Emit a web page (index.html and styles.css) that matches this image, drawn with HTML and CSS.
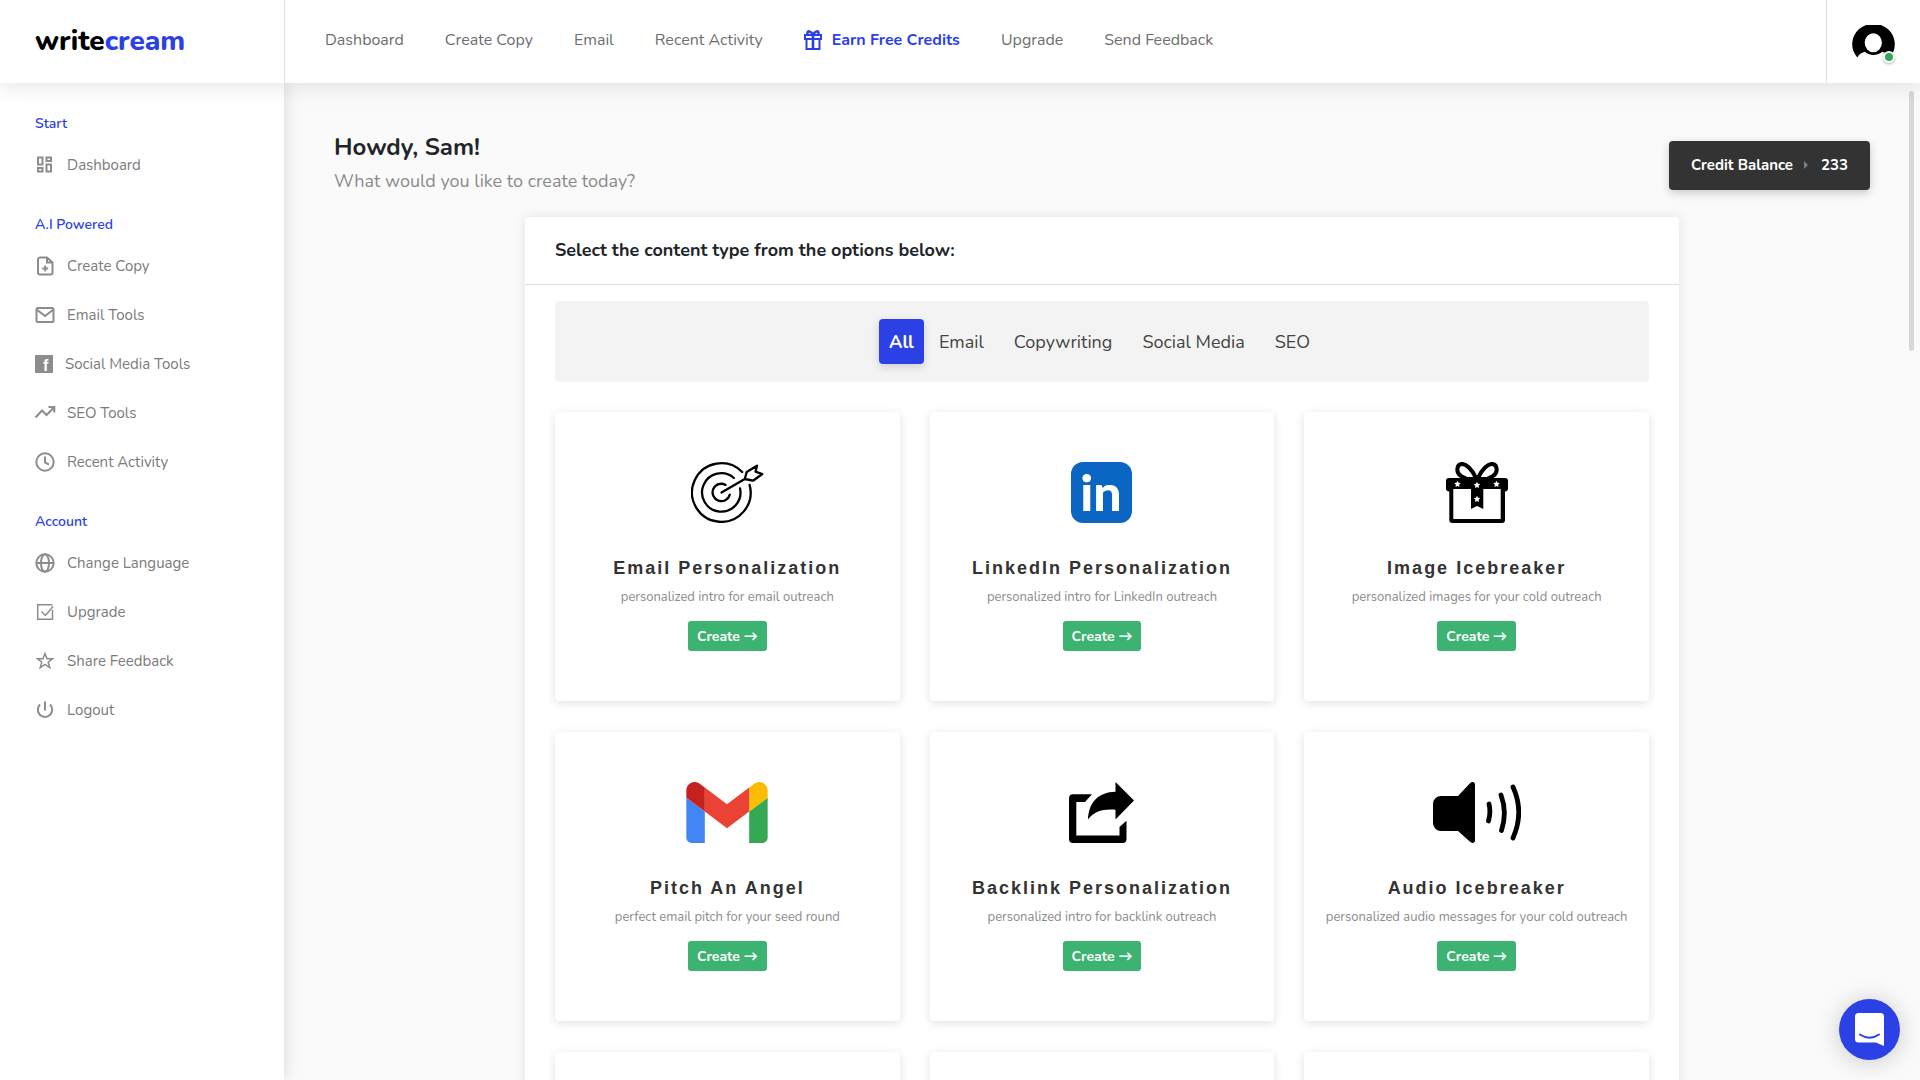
FILE: index.html
```html
<!DOCTYPE html>
<html lang="en">
<head>
    <meta charset="UTF-8">
    <meta name="viewport" content="width=device-width, initial-scale=1.0">
    <title>Writecream</title>
    <link rel="stylesheet" href="styles.css">
</head>
<body>
    <header class="topbar">
        <a class="logo" href="#">write<span>cream</span></a>
        <nav class="topnav">
            <a href="#">Dashboard</a>
            <a href="#">Create Copy</a>
            <a href="#">Email</a>
            <a href="#">Recent Activity</a>
            <a class="earn" href="#">
                <svg width="18" height="20" viewBox="0 0 18 20" fill="none" stroke="currentColor" stroke-width="2"><path d="M1 5h16v4H1zM2.500 9v10h13V9"/><path d="M9 5v14M9 4.500C7 1 3 0 3.500 4M9 4.500c2-3.500 6-4.500 5.500-.500" stroke-width="2.600"/></svg>
                Earn Free Credits
            </a>
            <a href="#">Upgrade</a>
            <a href="#">Send Feedback</a>
        </nav>
        <button class="profile" aria-label="Profile">
            <span class="avatar">
                <svg width="43" height="43" viewBox="0 0 43 43"><path d="M5.300 32.500A21.300 20.500 0 1 1 37.700 32.500C36 29.500 33 27.500 30 26.800C26 31 17 31 13 26.800C10 27.500 7 29 5.300 32.500z"/><ellipse cx="21.300" cy="17.700" rx="8.600" ry="9.500" fill="#fff"/></svg>
                <span class="status"></span>
            </span>
        </button>
    </header>

    <div class="layout">
        <aside class="sidebar">
            <h2>Start</h2>
            <ul>
                <li><a href="#"><svg viewBox="0 0 20 20"><path d="M3 2.500h4.500v7H3zM11.500 2.500H16v3.500h-4.500zM11.500 9.500H16v7h-4.500zM3 13h4.500v3.500H3z"/></svg>Dashboard</a></li>
            </ul>
            <h2>A.I Powered</h2>
            <ul>
                <li><a href="#"><svg viewBox="0 0 20 20"><path d="M12 1.500H5A2 2 0 0 0 3 3.500v13a2 2 0 0 0 2 2h10.500a2 2 0 0 0 2-2V6.500zM12 1.500v5h5.500M10.200 9.500v6M7.200 12.500h6"/></svg>Create Copy</a></li>
                <li><a href="#"><svg viewBox="0 0 20 20"><rect x="1.500" y="3" width="17" height="14" rx="1.500"/><path d="M1.500 4.500L10 11l8.500-6.500"/></svg>Email Tools</a></li>
                <li><a class="facebook" href="#"><svg viewBox="0 0 18 20"><path class="solid" d="M0 1h18v18H0z"/><text x="8" y="17">f</text></svg>Social Media Tools</a></li>
                <li><a href="#"><svg viewBox="0 0 20 20"><path d="M.500 14.500l6.500-7 4.500 4.500L19 4.500M13.500 4H19.300v5.500"/></svg>SEO Tools</a></li>
                <li><a href="#"><svg viewBox="0 0 20 20"><circle cx="10" cy="10" r="8.700"/><path d="M10 4.500v6l4 2.200"/></svg>Recent Activity</a></li>
            </ul>
            <h2>Account</h2>
            <ul>
                <li><a href="#"><svg viewBox="0 0 20 20"><circle cx="10" cy="10" r="8.700"/><ellipse cx="10" cy="10" rx="4" ry="8.700"/><path d="M1.500 10h17"/></svg>Change Language</a></li>
                <li><a class="thin" href="#"><svg viewBox="0 0 20 20"><path d="M17.500 2.700H2.700v14.600h14.800V8M6.500 9.500l4 4L18 4.500"/></svg>Upgrade</a></li>
                <li><a class="thin" href="#"><svg viewBox="0 0 20 20"><path d="M10 2.500l2 5.200h5.500l-4.300 3.500 1.600 5.600L10 13.500l-4.800 3.300 1.600-5.600L2.500 7.700H8z"/></svg>Share Feedback</a></li>
                <li><a href="#"><svg viewBox="0 0 20 20"><path d="M10 1.500v9M5 4.500a7.200 7.200 0 1 0 10 0"/></svg>Logout</a></li>
            </ul>
        </aside>

        <main class="content">
            <div class="welcome">
                <div>
                    <h1>Howdy, Sam!</h1>
                    <p>What would you like to create today?</p>
                </div>
                <button class="credit">Credit Balance <i></i> 233</button>
            </div>

            <section class="panel">
                <h2 class="panel-title">Select the content type from the options below:</h2>
                <div class="panel-body">
                    <div class="tabs">
                        <button class="tab active">All</button>
                        <button class="tab">Email</button>
                        <button class="tab">Copywriting</button>
                        <button class="tab">Social Media</button>
                        <button class="tab">SEO</button>
                    </div>

                    <div class="cards">
                        <article class="card">
                            <svg width="73" height="61" viewBox="0 0 73 61" fill="none" stroke="#000" stroke-width="2.300" stroke-linecap="round" stroke-linejoin="round"><path d="M51.200 10A29.300 29.300 0 1 0 58.600 22.900M42.900 16A19.200 19.200 0 1 0 49 26.300M34.600 22.900A8.700 8.700 0 1 0 38.700 32.700M30.500 30.500L53.800 17M53.800 17l1.900-7L66 3.700l-1.500 6 6.800 2.300L62 18.700z"/></svg>
                            <h3>Email Personalization</h3>
                            <p>personalized intro for email outreach</p>
                            <button class="create">Create →</button>
                        </article>
                        <article class="card">
                            <svg class="linkedin" width="61" height="61" viewBox="0 0 61 61"><rect width="61" height="61" rx="12" fill="#0a66c2"/><text x="30" y="49" text-anchor="middle">in</text></svg>
                            <h3>LinkedIn Personalization</h3>
                            <p>personalized intro for LinkedIn outreach</p>
                            <button class="create">Create →</button>
                        </article>
                        <article class="card">
                            <svg width="62" height="61" viewBox="0 0 62 61">
                                <defs><path id="star" d="M0-3.300l1 2.100 2.300.300-1.700 1.600.400 2.300L0 1.900-2 3l.400-2.300L-3.300-.900-1-1.200z" fill="#fff"/></defs>
                                <path d="M30 16C26 7 20 1.500 15.500 2 10 3 10 11 15 14l5 2.500M32 16C36 7 42 1.500 46.500 2 52 3 52 11 47 14l-5 2.500M18 17h26" fill="none" stroke="#000" stroke-width="4"/>
                                <path d="M3 16h56a3 3 0 0 1 3 3v7a3 3 0 0 1-3 3.500V58a3 3 0 0 1-3 3H6.300a3 3 0 0 1-3-3V29.500A3 3 0 0 1 0 26v-7a3 3 0 0 1 3-3zM7.300 27v30h47.400V27H37.300v20L31 44l-6 3V27z" fill-rule="evenodd"/>
                                <use href="#star" x="11.500" y="22"/><use href="#star" x="31" y="23"/><use href="#star" x="50.500" y="22"/><use href="#star" x="31" y="37"/>
                            </svg>
                            <h3>Image Icebreaker</h3>
                            <p>personalized images for your cold outreach</p>
                            <button class="create">Create →</button>
                        </article>
                        <article class="card">
                            <svg width="82" height="61" viewBox="52 42 88 66"><path fill="#4285f4" d="M58 108h14V74L52 59v43c0 3.320 2.690 6 6 6"/><path fill="#34a853" d="M120 108h14c3.320 0 6-2.690 6-6V59l-20 15"/><path fill="#fbbc04" d="M120 48v26l20-15v-8c0-7.420-8.470-11.650-14.400-7.200"/><path fill="#ea4335" d="M72 74V48l24 18 24-18v26L96 92"/><path fill="#c5221f" d="M52 51v8l20 15V48l-5.600-4.200c-5.940-4.450-14.400-.220-14.400 7.200"/></svg>
                            <h3>Pitch An Angel</h3>
                            <p>perfect email pitch for your seed round</p>
                            <button class="create">Create →</button>
                        </article>
                        <article class="card">
                            <svg width="65" height="61" viewBox="0 0 65 61"><path d="M23 12.300H4a4 4 0 0 0-4 4V57a4 4 0 0 0 4 4h49.500a4 4 0 0 0 4-4V38.700L50.500 45v8.500H7.300V20H16z"/><path d="M46.500 0L65 18.500 46.500 37.500V27.700C35 26.500 25 29 19 37.500 19.500 21 29 10 46.500 9.700z"/></svg>
                            <h3>Backlink Personalization</h3>
                            <p>personalized intro for backlink outreach</p>
                            <button class="create">Create →</button>
                        </article>
                        <article class="card">
                            <svg width="88" height="61" viewBox="0 0 88 61"><path d="M8 14h17L37 1.200C39-1 42 0 42 2.500v56c0 2.500-3 3.300-5 1.300L25 49H8a8 8 0 0 1-8-8V22a8 8 0 0 1 8-8z"/><path d="M56 22q2 8-.500 17M68 13q6.500 17 .500 35.500M80 5q11.500 25 0 51" fill="none" stroke="#000" stroke-width="4.800" stroke-linecap="round"/></svg>
                            <h3>Audio Icebreaker</h3>
                            <p>personalized audio messages for your cold outreach</p>
                            <button class="create">Create →</button>
                        </article>
                        <article class="card"></article>
                        <article class="card"></article>
                        <article class="card"></article>
                    </div>
                </div>
            </section>
        </main>
    </div>

    <div class="scroll-thumb"></div>
    <button class="chat" aria-label="Open chat">
        <svg width="29" height="33" viewBox="0 0 29 33"><path d="M3.500 0h22A3.500 3.500 0 0 1 29 3.500V33l-8-3.500H3.500A3.500 3.500 0 0 1 0 26V3.500A3.500 3.500 0 0 1 3.500 0z" fill="#fff"/><path d="M5 21.500q9.500 6.500 19 0" fill="none" stroke="#2b41e6" stroke-width="2" stroke-linecap="round"/></svg>
    </button>
</body>
</html>
```
FILE: styles.css
```css
* {
    box-sizing: border-box;
    margin: 0;
    padding: 0;
}

body {
    font-family: "Nunito", "Lato", sans-serif;
    height: 100vh;
    display: flex;
    flex-direction: column;
    overflow: hidden;
    background: #fafafa;
    color: #212529;
}

a {
    color: inherit;
    text-decoration: none;
}

button {
    font-family: inherit;
    border: none;
    cursor: pointer;
}

/* Top bar */
.topbar {
    display: flex;
    flex-shrink: 0;
    height: 83px;
    background: #fff;
    box-shadow: 0 4px 20px rgba(0, 0, 0, 0.1);
    z-index: 2;
}

.logo {
    width: 285px;
    padding-left: 35px;
    border-right: 1px solid #e0e0e0;
    font-size: 28px;
    font-weight: 800;
    line-height: 83px;
    color: #000;
}

.logo span {
    color: #2b41e6;
}

.topnav {
    flex: 1;
    display: flex;
    align-items: center;
    gap: 41px;
    padding: 0 40px 3px;
    font-size: 16px;
    color: #6e6e6e;
    white-space: nowrap;
}

.earn {
    display: flex;
    align-items: center;
    gap: 10px;
    font-weight: 700;
    color: #2b41e6;
}

.profile {
    width: 94px;
    padding: 4px 0 0 25px;
    background: none;
    border-left: 1px solid #e0e0e0;
    text-align: left;
}

.avatar {
    position: relative;
    display: block;
    width: 43px;
    height: 37px;
}

.status {
    position: absolute;
    right: 0;
    bottom: -1px;
    width: 12px;
    height: 12px;
    border: 2px solid #fff;
    border-radius: 50%;
    background: #34a853;
    box-shadow: 0 1px 3px rgba(0, 0, 0, 0.3);
}

.layout {
    flex: 1;
    display: flex;
    min-height: 0;
}

/* Sidebar */
.sidebar {
    flex-shrink: 0;
    width: 284px;
    padding: 31px 35px;
    background: #fff;
    box-shadow: 0 0 16px rgba(0, 0, 0, 0.14);
    z-index: 1;
}

.sidebar h2 {
    font-size: 14px;
    font-weight: 600;
    line-height: 20px;
    color: #2b41e6;
}

.sidebar ul {
    list-style: none;
    padding: 6px 0 26px;
}

.sidebar a {
    display: flex;
    align-items: center;
    gap: 12px;
    height: 49px;
    font-size: 15px;
    color: #7b7b7b;
}

.sidebar svg {
    width: 20px;
    height: 20px;
    fill: none;
    stroke: #8c8c8c;
    stroke-width: 2;
    overflow: visible;
}

.sidebar .thin svg {
    stroke-width: 1.5;
}

.sidebar .facebook svg {
    width: 18px;
}

.facebook .solid {
    fill: #8c8c8c;
    stroke: none;
}

.facebook text {
    font: 700 16px "Liberation Sans", sans-serif;
    fill: #fff;
    stroke: none;
}

/* Main content */
.content {
    flex: 1;
    padding: 48px 50px 0;
    overflow: hidden;
}

.welcome {
    display: flex;
    justify-content: space-between;
    align-items: center;
    margin-bottom: 18px;
}

.welcome h1 {
    font-size: 24px;
    font-weight: 700;
    line-height: 32px;
}

.welcome p {
    font-size: 18px;
    line-height: 36px;
    color: #8b8b8b;
}

.credit {
    display: flex;
    align-items: center;
    gap: 11px;
    height: 49px;
    padding: 0 22px;
    border-radius: 4px;
    background: #333;
    color: #fff;
    font-size: 15px;
    font-weight: 700;
    box-shadow: 0 3px 10px rgba(0, 0, 0, 0.2);
}

.credit i {
    border-left: 4px solid #7c7c7c;
    border-top: 4px solid transparent;
    border-bottom: 4px solid transparent;
    margin-right: 2px;
}

.panel {
    max-width: 1154px;
    margin: 0 auto;
    border-radius: 4px;
    background: #fff;
    box-shadow: 0 0 12px rgba(0, 0, 0, 0.1);
}

.panel-title {
    padding: 0 30px;
    border-bottom: 1px solid #e0e0e0;
    font-size: 18px;
    font-weight: 700;
    line-height: 67px;
}

.panel-body {
    padding: 16px 30px 30px;
}

.tabs {
    display: flex;
    justify-content: center;
    padding: 18px 0;
    margin-bottom: 30px;
    border-radius: 4px;
    background: #f3f3f3;
}

.tab {
    height: 45px;
    padding: 0 10px;
    margin: 0 5px;
    border-radius: 4px;
    background: none;
    font-size: 18px;
    color: #444;
}

.tab.active {
    margin: 0;
    background: #2b41e6;
    color: #fff;
    font-weight: 700;
    box-shadow: 0 3px 8px rgba(0, 0, 0, 0.15);
}

.cards {
    display: grid;
    grid-template-columns: repeat(3, 1fr);
    gap: 31px 30px;
}

.card {
    display: flex;
    flex-direction: column;
    align-items: center;
    min-height: 289px;
    padding: 50px 10px 49px;
    border-radius: 4px;
    background: #fff;
    box-shadow: 0 2px 10px rgba(0, 0, 0, 0.12);
}

.card h3 {
    margin-top: 34px;
    font-family: "Liberation Sans", Arial, sans-serif;
    font-size: 18px;
    font-weight: 700;
    letter-spacing: 2px;
    line-height: 22px;
    color: #333;
}

.card p {
    margin: 8px 0 14px;
    font-size: 13px;
    line-height: 20px;
    color: #8b8b8b;
}

.linkedin text {
    font: 900 50px "Lato", sans-serif;
    fill: #fff;
}

.create {
    height: 30px;
    padding: 0 9px;
    border-radius: 3px;
    background: #3cb371;
    color: #fff;
    font-size: 14px;
    font-weight: 700;
}

/* Floating parts */
.scroll-thumb {
    position: absolute;
    top: 91px;
    right: 6px;
    width: 5px;
    height: 260px;
    border-radius: 3px;
    background: #d8d8d8;
}

.chat {
    position: fixed;
    right: 20px;
    bottom: 20px;
    display: flex;
    align-items: center;
    justify-content: center;
    width: 61px;
    height: 61px;
    border-radius: 50%;
    background: #2b41e6;
    box-shadow: 0 2px 24px rgba(0, 0, 0, 0.2);
    z-index: 3;
}
```
